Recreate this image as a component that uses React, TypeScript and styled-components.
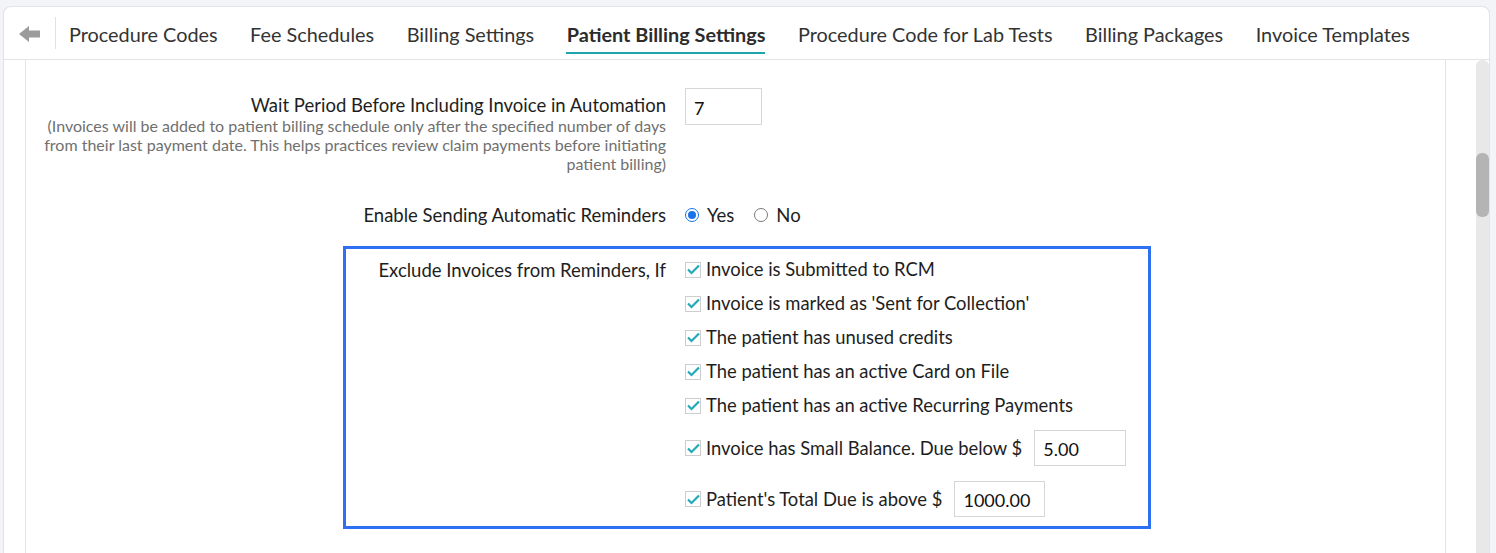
import React from "react";
import styled, { createGlobalStyle } from "styled-components";

const GlobalStyle = createGlobalStyle`
  html, body {
    margin: 0;
    padding: 0;
    background: #f3f4f7;
    font-family: Lato, "Open Sans", Arial, sans-serif;
    color: #222;
  }
  * { box-sizing: border-box; }
`;

const Page = styled.div`
  height: 100vh;
  padding: 6px 6px 0 3px;
  overflow: hidden;
`;

const Card = styled.div`
  height: 100%;
  background: #fff;
  border: 1px solid #e2e3e7;
  border-bottom: none;
  border-radius: 8px 8px 0 0;
  display: flex;
  flex-direction: column;
`;

const TabBar = styled.nav`
  height: 53px;
  flex: none;
  display: flex;
  align-items: stretch;
  border-bottom: 1px solid #e4e4e4;
`;

const BackButton = styled.button`
  width: 51px;
  border: none;
  background: none;
  padding: 2px 0 0 0;
  display: flex;
  align-items: center;
  justify-content: center;
  cursor: pointer;
`;

const Divider = styled.span`
  width: 1px;
  height: 32px;
  align-self: center;
  background: #e2e2e2;
`;

const TabList = styled.div`
  display: flex;
  align-items: stretch;
  gap: 32.5px;
  margin-left: 13px;
`;

const Tab = styled.a<{ $active?: boolean }>`
  position: relative;
  display: flex;
  align-items: center;
  padding-top: 1px;
  font-size: 19.85px;
  font-weight: ${(p) => (p.$active ? 700 : 400)};
  color: ${(p) => (p.$active ? "#2c2c2c" : "#333")};
  white-space: nowrap;
  cursor: pointer;

  &::after {
    content: "";
    display: ${(p) => (p.$active ? "block" : "none")};
    position: absolute;
    left: -1px;
    right: 0;
    bottom: 5px;
    height: 2.5px;
    background: #1fa5ab;
  }
`;

const Body = styled.div`
  flex: 1;
  display: grid;
  grid-template-columns: 1fr 12px;
  column-gap: 31px;
  padding-left: 21px;
  min-height: 0;
`;

const Panel = styled.section`
  border-left: 1px solid #e3e3e3;
  border-right: 1px solid #e3e3e3;
  padding-top: 28px;
  display: flex;
  flex-direction: column;
`;

const Track = styled.div`
  background: #e8e8e8;
  border-radius: 6px 6px 0 0;
  margin-left: -1px;
`;

const Thumb = styled.div`
  margin-top: 93px;
  height: 64px;
  border-radius: 6px;
  background: #b4b4b4;
`;

const FieldRow = styled.div<{ $labelWidth: number; $mt?: number }>`
  display: grid;
  grid-template-columns: ${(p) => p.$labelWidth}px 1fr;
  column-gap: 19px;
  align-items: start;
  margin-top: ${(p) => p.$mt ?? 0}px;
`;

const LabelBlock = styled.div<{ $pt?: number }>`
  text-align: right;
  padding-top: ${(p) => p.$pt ?? 0}px;
`;

const Label = styled.div`
  font-size: 18.5px;
  line-height: 22px;
  color: #1e1e1e;
`;

const Hint = styled.div`
  font-size: 16px;
  line-height: 19px;
  color: #707070;
`;

const TextBox = styled.input<{ $w: number; $h: number }>`
  width: ${(p) => p.$w}px;
  height: ${(p) => p.$h}px;
  border: 1px solid #d6d6d6;
  padding: 2px 0 0 8px;
  font-family: Lato, Arial, sans-serif;
  font-size: 18px;
  color: #111;
  background: #fff;
  outline: none;
`;

const RadioGroup = styled.div`
  display: flex;
  align-items: center;
  gap: 20px;
  height: 22px;
`;

const RadioOption = styled.label`
  display: flex;
  align-items: center;
  gap: 8px;
  font-size: 18.5px;
  color: #1e1e1e;
  cursor: pointer;
`;

const RadioDot = styled.span<{ $checked?: boolean }>`
  width: 14px;
  height: 14px;
  border-radius: 50%;
  border: ${(p) => (p.$checked ? "1.5px solid #1a73e8" : "1px solid #7a7a7a")};
  display: flex;
  align-items: center;
  justify-content: center;

  &::after {
    content: "";
    width: 8px;
    height: 8px;
    border-radius: 50%;
    background: #1a73e8;
    display: ${(p) => (p.$checked ? "block" : "none")};
  }
`;

const RuleBox = styled.div`
  margin-top: 20px;
  margin-left: 317px;
  width: 808px;
  border: 3px solid #2f6ff2;
  padding: 10px 0 8px;
`;

const CheckList = styled.div`
  display: flex;
  flex-direction: column;
  gap: 13px;
`;

const CheckRow = styled.label<{ $withInput?: boolean }>`
  display: flex;
  align-items: center;
  min-height: ${(p) => (p.$withInput ? 38 : 21)}px;
  font-size: 18.4px;
  line-height: 21px;
  color: #1e1e1e;
  cursor: pointer;
`;

const CheckBox = styled.span`
  width: 16px;
  height: 16px;
  flex: none;
  border: 1px solid #cdcdcd;
  background: #fff;
  margin-right: 5px;
  display: flex;
  align-items: center;
  justify-content: center;
`;

const Amount = styled(TextBox)`
  margin-left: 12px;
`;

const BackArrow = () => (
  <svg width="21" height="16" viewBox="0 0 21 16" aria-hidden="true">
    <path d="M0 8 L10 0 L10 4.5 L21 4.5 L21 11.5 L10 11.5 L10 16 Z" fill="#9b9b9b" />
  </svg>
);

const Tick = () => (
  <svg width="13" height="11" viewBox="0 0 13 11" aria-hidden="true">
    <path d="M1 5.5 L4.5 9 L12 1.5" fill="none" stroke="#24a8b8" strokeWidth="2.2" />
  </svg>
);

const tabs = [
  "Procedure Codes",
  "Fee Schedules",
  "Billing Settings",
  "Patient Billing Settings",
  "Procedure Code for Lab Tests",
  "Billing Packages",
  "Invoice Templates",
];

type Exclusion = { text: string; amount?: string; width?: number };

const exclusions: Exclusion[] = [
  { text: "Invoice is Submitted to RCM" },
  { text: "Invoice is marked as 'Sent for Collection'" },
  { text: "The patient has unused credits" },
  { text: "The patient has an active Card on File" },
  { text: "The patient has an active Recurring Payments" },
  { text: "Invoice has Small Balance. Due below $", amount: "5.00", width: 92 },
  { text: "Patient's Total Due is above $", amount: "1000.00", width: 91 },
];

export default function App() {
  return (
    <>
      <GlobalStyle />
      <Page>
        <Card>
          <TabBar>
            <BackButton aria-label="Back">
              <BackArrow />
            </BackButton>
            <Divider />
            <TabList>
              {tabs.map((t) => (
                <Tab key={t} $active={t === "Patient Billing Settings"}>
                  {t}
                </Tab>
              ))}
            </TabList>
          </TabBar>
          <Body>
            <Panel>
              <FieldRow $labelWidth={640}>
                <LabelBlock $pt={6}>
                  <Label>Wait Period Before Including Invoice in Automation</Label>
                  <Hint>
                    (Invoices will be added to patient billing schedule only after the specified number of days
                    from their last payment date. This helps practices review claim payments before initiating
                    patient billing)
                  </Hint>
                </LabelBlock>
                <TextBox $w={77} $h={37} defaultValue="7" />
              </FieldRow>

              <FieldRow $labelWidth={640} $mt={31}>
                <LabelBlock>
                  <Label>Enable Sending Automatic Reminders</Label>
                </LabelBlock>
                <RadioGroup>
                  <RadioOption>
                    <RadioDot $checked />
                    Yes
                  </RadioOption>
                  <RadioOption>
                    <RadioDot />
                    No
                  </RadioOption>
                </RadioGroup>
              </FieldRow>

              <RuleBox>
                <FieldRow $labelWidth={320}>
                  <LabelBlock>
                    <Label>Exclude Invoices from Reminders, If</Label>
                  </LabelBlock>
                  <CheckList>
                    {exclusions.map((e) => (
                      <CheckRow key={e.text} $withInput={!!e.amount}>
                        <CheckBox>
                          <Tick />
                        </CheckBox>
                        {e.text}
                        {e.amount && <Amount $w={e.width ?? 92} $h={36} defaultValue={e.amount} />}
                      </CheckRow>
                    ))}
                  </CheckList>
                </FieldRow>
              </RuleBox>
            </Panel>
            <Track>
              <Thumb />
            </Track>
          </Body>
        </Card>
      </Page>
    </>
  );
}
